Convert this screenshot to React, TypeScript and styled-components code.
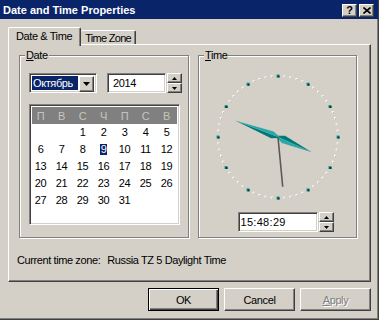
import React from "react"
import styled, { createGlobalStyle, css } from "styled-components"

const NAVY = "#0a246a"
const FACE = "#d4d0c8"

const GlobalStyle = createGlobalStyle`
  html, body {
    margin: 0;
    padding: 0;
    background: ${FACE};
  }
  body {
    font-family: "Liberation Sans", Arial, sans-serif;
    font-size: 11px;
    letter-spacing: -0.4px;
    color: #000;
  }
  * {
    box-sizing: border-box;
  }
`

const raised = css`
  border: 1px solid;
  border-color: #fff #404040 #404040 #fff;
  box-shadow: inset -1px -1px 0 #808080;
`

const sunken = css`
  border: 1px solid;
  border-color: #808080 #fff #fff #808080;
  box-shadow: inset 1px 1px 0 #404040, inset -1px -1px 0 ${FACE};
`

const Window = styled.div`
  width: 379px;
  height: 320px;
  display: flex;
  flex-direction: column;
  background: ${FACE};
  border-right: 1px solid #404040;
  border-bottom: 1px solid #404040;
  box-shadow: inset -1px -1px 0 #808080;
  overflow: hidden;
`

const TitleBar = styled.div`
  height: 19px;
  flex: none;
  display: flex;
  align-items: center;
  padding: 1px 4px 0 3px;
  background: ${NAVY};
  color: #fff;
`

const Title = styled.span`
  flex: 1;
  font-weight: bold;
  letter-spacing: 0;
`

const TitleButton = styled.button`
  ${raised};
  width: 15px;
  height: 13px;
  margin-left: 2px;
  padding: 0;
  display: flex;
  align-items: center;
  justify-content: center;
  background: ${FACE};
  font: bold 11px "Liberation Sans", Arial, sans-serif;
  color: #000;
`

const Body = styled.div`
  flex: 1;
  display: flex;
  flex-direction: column;
  padding: 8px 7px 0 8px;
`

const TabStrip = styled.div`
  height: 17px;
  display: flex;
  align-items: flex-end;
  position: relative;
  z-index: 1;
`

const Tab = styled.div<{ $active?: boolean }>`
  display: flex;
  align-items: center;
  background: ${FACE};
  border-top: 1px solid #fff;
  border-left: 1px solid #fff;
  border-right: 1px solid #404040;
  box-shadow: inset -1px 0 0 #808080;
  border-radius: 2px 2px 0 0;
  ${p =>
    p.$active
      ? css`
          height: 19px;
          margin-bottom: -2px;
          padding: 0 8px 3px 7px;
        `
      : css`
          height: 14px;
          padding: 0 4px 0 4px;
          border-left: none;
          letter-spacing: -0.7px;
        `}
`

const Panel = styled.div`
  width: 363px;
  height: 238px;
  display: flex;
  flex-direction: column;
  border: 1px solid;
  border-color: #fff #404040 #404040 #fff;
  box-shadow: inset -1px -1px 0 #808080;
`

const GroupRow = styled.div`
  display: flex;
  gap: 9px;
  padding: 10px 0 0 10px;
`

const Group = styled.div<{ $w: number }>`
  position: relative;
  width: ${p => p.$w}px;
  height: 183px;
  display: flex;
  flex-direction: column;
  border: 1px solid #808080;
  box-shadow: inset 1px 1px 0 #fff, 1px 1px 0 #fff;
`

const Legend = styled.span`
  position: absolute;
  top: -8px;
  left: 5px;
  padding: 0 1px;
  background: ${FACE};
  line-height: 14px;
`

const DateBody = styled.div`
  display: flex;
  flex-direction: column;
  padding: 17px 0 0 9px;
`

const FieldRow = styled.div`
  display: flex;
  align-items: center;
  gap: 10px;
`

const Combo = styled.div`
  ${sunken};
  width: 68px;
  height: 20px;
  display: flex;
  align-items: stretch;
  padding: 2px;
  background: #fff;
`

const ComboText = styled.span`
  flex: 1;
  display: flex;
  align-items: center;
  padding-left: 1px;
  margin-right: 1px;
  background: ${NAVY};
  color: #fff;
`

const ArrowButton = styled.div<{ $h?: number }>`
  ${raised};
  width: 15px;
  height: ${p => p.$h ?? 16}px;
  display: flex;
  align-items: center;
  justify-content: center;
  background: ${FACE};
`

const SpinGroup = styled.div`
  display: flex;
  align-items: center;
  gap: 1px;
`

const Edit = styled.div<{ $w: number }>`
  ${sunken};
  width: ${p => p.$w}px;
  height: 20px;
  display: flex;
  align-items: center;
  padding-left: 5px;
  background: #fff;
`

const Spinner = styled.div`
  display: flex;
  flex-direction: column;
  height: 20px;
`

const Calendar = styled.div`
  ${sunken};
  width: 151px;
  height: 121px;
  margin-top: 11px;
  padding: 2px;
  background: #fff;
`

const CalGrid = styled.div<{ $head?: boolean }>`
  display: grid;
  grid-template-columns: repeat(7, 21px);
  grid-auto-rows: 17px;
  background: ${p => (p.$head ? "#808080" : "#fff")};
  color: ${p => (p.$head ? "#c8c4bc" : "#000")};
`

const Cell = styled.div`
  display: flex;
  align-items: center;
  justify-content: center;
  padding-right: 4px;
`

const DayMark = styled.span<{ $sel?: boolean }>`
  line-height: 11px;
  padding: 0 1px;
  ${p =>
    p.$sel &&
    css`
      background: ${NAVY};
      color: #fff;
    `}
`

const TimeBody = styled.div`
  display: flex;
  flex-direction: column;
  align-items: center;
  padding-top: 14px;
`

const TimeRow = styled.div`
  display: flex;
  gap: 1px;
  margin: 8px 0 0 16px;
`

const TimeText = styled.span`
  letter-spacing: 0.3px;
  margin-left: -3px;
`

const ZoneLine = styled.div`
  display: flex;
  gap: 7px;
  margin-top: 16px;
  padding-left: 8px;
`

const Footer = styled.div`
  display: flex;
  justify-content: flex-end;
  gap: 5px;
  margin-top: 6px;
`

const Button = styled.button<{ $default?: boolean; $disabled?: boolean }>`
  width: 71px;
  height: 23px;
  padding: 0;
  background: ${FACE};
  font: 11px "Liberation Sans", Arial, sans-serif;
  letter-spacing: -0.4px;
  color: ${p => (p.$disabled ? "#808080" : "#000")};
  text-shadow: ${p => (p.$disabled ? "1px 1px 0 #fff" : "none")};
  ${p =>
    p.$default
      ? css`
          border: 1px solid #000;
          box-shadow: inset 1px 1px 0 #fff, inset -1px -1px 0 #404040,
            inset -2px -2px 0 #808080;
        `
      : raised}
`

const Arrow = ({ up }: { up?: boolean }) => (
  <svg width="7" height="4" viewBox="0 0 7 4">
    <polygon points={up ? "3.5,0 7,4 0,4" : "0,0 7,0 3.5,4"} fill="#000" />
  </svg>
)

const SmallArrow = ({ up }: { up?: boolean }) => (
  <svg width="5" height="3" viewBox="0 0 5 3">
    <polygon points={up ? "2.5,0 5,3 0,3" : "0,0 5,0 2.5,3"} fill="#000" />
  </svg>
)

const Spin = () => (
  <Spinner>
    <ArrowButton $h={10}>
      <SmallArrow up />
    </ArrowButton>
    <ArrowButton $h={10}>
      <SmallArrow />
    </ArrowButton>
  </Spinner>
)

// clock drawing
const CX = 65
const CY = 65

function handPoints(deg: number, len: number, width: number, wide: number, back: number) {
  const a = ((deg - 90) * Math.PI) / 180
  const ux = Math.cos(a)
  const uy = Math.sin(a)
  const nx = -uy
  const ny = ux
  const tip = [CX + ux * len, CY + uy * len]
  const mx = CX + ux * wide
  const my = CY + uy * wide
  const left = [mx + (nx * width) / 2, my + (ny * width) / 2]
  const right = [mx - (nx * width) / 2, my - (ny * width) / 2]
  const tail = [CX - ux * back, CY - uy * back]
  const s = (pts: number[][]) => pts.map(p => p.join(",")).join(" ")
  return { a: s([tip, left, tail]), b: s([tip, right, tail]) }
}

const Hand = ({ deg, len, width }: { deg: number; len: number; width: number }) => {
  const h = handPoints(deg, len, width, 6, 3)
  return (
    <g>
      <polygon points={h.b} fill="#007878" />
      <polygon points={h.a} fill="#2aa8a8" />
    </g>
  )
}

const Clock = () => {
  const marks = Array.from({ length: 60 }, (_, i) => {
    const a = ((i * 6 - 90) * Math.PI) / 180
    return { x: CX + 60 * Math.cos(a), y: CY + 61 * Math.sin(a), hour: i % 5 === 0, i }
  })
  const sec = ((174.6 - 90) * Math.PI) / 180
  return (
    <svg width="130" height="134" viewBox="0 -2 130 134">
      {marks.map(m =>
        m.hour ? (
          <g key={m.i}>
            <rect x={m.x - 1.5} y={m.y - 1.5} width="3" height="3" fill="#1a9a9a" />
            <rect x={m.x - 0.5} y={m.y - 0.5} width="2" height="2" fill="#0a3434" />
          </g>
        ) : (
          <g key={m.i}>
            <rect x={m.x - 1} y={m.y - 1} width="2" height="2" fill="#fff" />
            <rect x={m.x} y={m.y} width="1" height="1" fill="#9a9a9a" />
          </g>
        )
      )}
      <Hand deg={114.2} len={37} width={8} />
      <Hand deg={290.9} len={46} width={7} />
      <line
        x1={CX}
        y1={CY}
        x2={CX + 50 * Math.cos(sec)}
        y2={CY + 50 * Math.sin(sec)}
        stroke="#5a5a5a"
        strokeWidth="1.6"
      />
    </svg>
  )
}

const weekDays = ["П", "В", "С", "Ч", "П", "С", "В"]
const monthCells: (number | null)[] = [null, null, ...Array.from({ length: 31 }, (_, i) => i + 1)]

export default function App() {
  return (
    <>
      <GlobalStyle />
      <Window>
        <TitleBar>
          <Title>Date and Time Properties</Title>
          <TitleButton>?</TitleButton>
          <TitleButton>
            <svg width="8" height="7" viewBox="0 0 8 7">
              <path d="M0.5 0.5 L7.5 6.5 M7.5 0.5 L0.5 6.5" stroke="#000" strokeWidth="1.6" />
            </svg>
          </TitleButton>
        </TitleBar>
        <Body>
          <TabStrip>
            <Tab $active>Date &amp; Time</Tab>
            <Tab>Time Zone</Tab>
          </TabStrip>
          <Panel>
            <GroupRow>
              <Group $w={170}>
                <Legend>
                  <u>D</u>ate
                </Legend>
                <DateBody>
                  <FieldRow>
                    <Combo>
                      <ComboText>Октябрь</ComboText>
                      <ArrowButton>
                        <Arrow />
                      </ArrowButton>
                    </Combo>
                    <SpinGroup>
                      <Edit $w={59}>2014</Edit>
                      <Spin />
                    </SpinGroup>
                  </FieldRow>
                  <Calendar>
                    <CalGrid $head>
                      {weekDays.map((d, i) => (
                        <Cell key={i}>{d}</Cell>
                      ))}
                    </CalGrid>
                    <CalGrid>
                      {monthCells.map((d, i) => (
                        <Cell key={i}>{d && <DayMark $sel={d === 9}>{d}</DayMark>}</Cell>
                      ))}
                    </CalGrid>
                  </Calendar>
                </DateBody>
              </Group>
              <Group $w={159}>
                <Legend>
                  <u>T</u>ime
                </Legend>
                <TimeBody>
                  <Clock />
                  <TimeRow>
                    <Edit $w={80}>
                      <TimeText>15:48:29</TimeText>
                    </Edit>
                    <Spin />
                  </TimeRow>
                </TimeBody>
              </Group>
            </GroupRow>
            <ZoneLine>
              <span>Current time zone:</span>
              <span>Russia TZ 5 Daylight Time</span>
            </ZoneLine>
          </Panel>
          <Footer>
            <Button $default>OK</Button>
            <Button>Cancel</Button>
            <Button $disabled>
              <u>A</u>pply
            </Button>
          </Footer>
        </Body>
      </Window>
    </>
  )
}
